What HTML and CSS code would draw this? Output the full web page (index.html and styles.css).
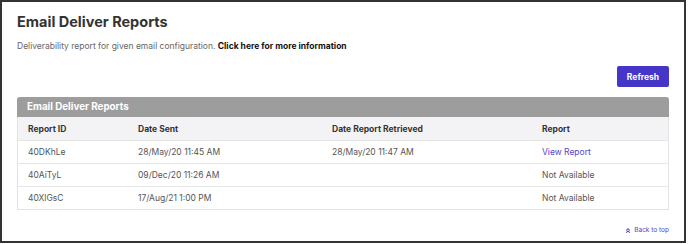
FILE: index.html
```html
<!DOCTYPE html>
<html lang="en">
<head>
    <meta charset="UTF-8">
    <meta name="viewport" content="width=device-width, initial-scale=1.0">
    <title>Email Deliver Reports</title>
    <link rel="stylesheet" href="styles.css">
</head>
<body>
    <div class="frame">
        <h1>Email Deliver Reports</h1>
        <p class="intro">Deliverability report for given email configuration. <a href="#">Click here for more information</a></p>
        <div class="toolbar">
            <button class="refresh">Refresh</button>
        </div>
        <div class="panel">
            <div class="panel-title">Email Deliver Reports</div>
            <table>
                <colgroup>
                    <col class="c-id">
                    <col class="c-sent">
                    <col class="c-retrieved">
                    <col>
                </colgroup>
                <thead>
                    <tr>
                        <th>Report ID</th>
                        <th>Date Sent</th>
                        <th>Date Report Retrieved</th>
                        <th>Report</th>
                    </tr>
                </thead>
                <tbody>
                    <tr>
                        <td>40DKhLe</td>
                        <td>28/May/20 11:45 AM</td>
                        <td>28/May/20 11:47 AM</td>
                        <td><a href="#" class="view">View Report</a></td>
                    </tr>
                    <tr>
                        <td>40AiTyL</td>
                        <td>09/Dec/20 11:26 AM</td>
                        <td></td>
                        <td>Not Available</td>
                    </tr>
                    <tr>
                        <td>40XlGsC</td>
                        <td>17/Aug/21 1:00 PM</td>
                        <td></td>
                        <td>Not Available</td>
                    </tr>
                </tbody>
            </table>
        </div>
        <div class="footer">
            <a href="#" class="back-top">
                <svg width="6" height="7" viewBox="0 0 8 8" fill="none" stroke="currentColor" stroke-width="1.4">
                    <path d="M1.5 4 L4 1.5 L6.5 4"/>
                    <path d="M1.5 7 L4 4.5 L6.5 7"/>
                </svg>
                Back to top
            </a>
        </div>
    </div>
</body>
</html>
```

FILE: styles.css
```css
body {
    margin: 0;
    font-family: Inter, "Noto Sans", sans-serif;
    background: #fff;
}
.frame {
    border: 2px solid #333;
    padding: 0 15px;
    box-sizing: border-box;
    width: 686px;
    height: 243px;
}
h1 {
    margin: 0;
    padding-top: 10px;
    font-size: 14.5px;
    font-weight: 700;
    color: #333;
    line-height: 20px;
}
.intro {
    margin: 8px 0 0;
    font-size: 8.5px;
    line-height: 12px;
    color: #666;
}
.intro a {
    color: #111;
    font-weight: 700;
    text-decoration: none;
}
.toolbar {
    display: flex;
    justify-content: flex-end;
    margin-top: 14px;
}
.refresh {
    width: 52px;
    height: 21px;
    background: #4636c8;
    color: #fff;
    border: none;
    border-radius: 2px;
    font-family: inherit;
    font-size: 8.5px;
    font-weight: 700;
    padding: 0;
}
.panel {
    margin-top: 10px;
    border: 1px solid #e3e3e3;
    border-top: none;
    border-radius: 3px 3px 0 0;
}
.panel-title {
    background: #9d9d9d;
    color: #fff;
    font-size: 9.8px;
    font-weight: 700;
    height: 20px;
    line-height: 20px;
    padding-left: 10px;
    margin: 0 -1px;
    border-radius: 3px 3px 0 0;
}
table {
    width: 100%;
    border-collapse: collapse;
    table-layout: fixed;
    font-size: 8.5px;
}
.c-id { width: 110px; }
.c-sent { width: 194px; }
.c-retrieved { width: 210px; }
th {
    background: #f3f3f5;
    color: #333;
    font-weight: 700;
    text-align: left;
    height: 23px;
    padding: 0 0 0 10px;
}
td {
    color: #555;
    height: 22px;
    padding: 0 0 0 10px;
    border-top: 1px solid #e6e6e6;
}
.view {
    color: #5446c9;
    text-decoration: none;
}
.footer {
    display: flex;
    justify-content: flex-end;
    margin-top: 16px;
}
.back-top {
    color: #5446c9;
    font-size: 6.5px;
    text-decoration: none;
    display: flex;
    align-items: center;
    gap: 3px;
}
```
